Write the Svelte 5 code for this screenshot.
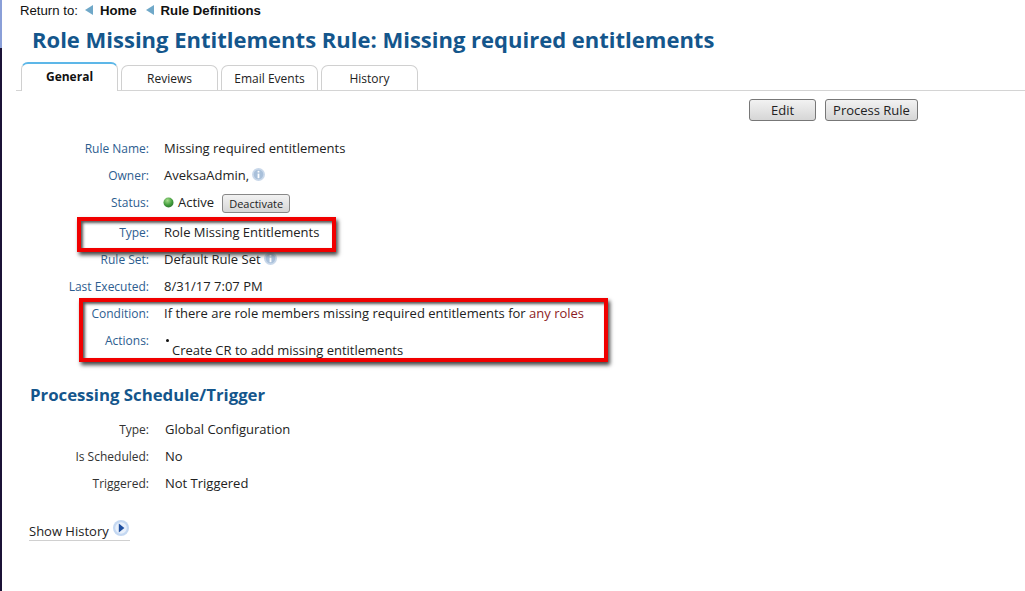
<script>
  const rows1 = [
    { label: 'Rule Name:', kind: 'text', value: 'Missing required entitlements' },
    { label: 'Owner:', kind: 'info', value: 'AveksaAdmin,' },
    { label: 'Status:', kind: 'status', value: 'Active' },
    { label: 'Type:', kind: 'text', value: 'Role Missing Entitlements' },
    { label: 'Rule Set:', kind: 'info', value: 'Default Rule Set' },
    { label: 'Last Executed:', kind: 'text', value: '8/31/17 7:07 PM' },
    { label: 'Condition:', kind: 'cond', value: 'If there are role members missing required entitlements for ' },
    { label: 'Actions:', kind: 'action', value: 'Create CR to add missing entitlements' }
  ];
  const rows2 = [
    { label: 'Type:', value: 'Global Configuration' },
    { label: 'Is Scheduled:', value: 'No' },
    { label: 'Triggered:', value: 'Not Triggered' }
  ];
  const tabs = ['General', 'Reviews', 'Email Events', 'History'];
</script>

<div class="page">
  <nav class="crumbs">
    <span>Return to:</span>
    <svg class="tri" viewBox="0 0 8 10" width="8" height="10"><path d="M0 5 L8 0 V10 Z" fill="#6fa8c8" /></svg>
    <b>Home</b>
    <svg class="tri" viewBox="0 0 8 10" width="8" height="10"><path d="M0 5 L8 0 V10 Z" fill="#6fa8c8" /></svg>
    <b>Rule Definitions</b>
  </nav>
  <h1>Role Missing Entitlements Rule: Missing required entitlements</h1>

  <div class="tabs">
    {#each tabs as t, i}
      <div class="tab" class:active={i === 0}>{t}</div>
    {/each}
  </div>

  <div class="actions">
    <button class="btn edit">Edit</button>
    <button class="btn process">Process Rule</button>
  </div>

  <div class="grid first">
    {#each rows1 as r}
      <div class="row" class:tall={r.kind === 'status'}>
        <div class="label">{r.label}</div>
        <div class="value" class:block={r.kind === 'action' || r.kind === 'cond'}>
          {#if r.kind === 'status'}
            <svg class="dot" viewBox="0 0 11 11" width="11" height="11">
              <defs><radialGradient id="g" cx="0.4" cy="0.3" r="0.8"><stop offset="0" stop-color="#a5dc8c" /><stop offset="0.6" stop-color="#3f9a3a" /><stop offset="1" stop-color="#2a6a2c" /></radialGradient></defs>
              <circle cx="5.5" cy="5.5" r="5" fill="url(#g)" />
            </svg>
            <span class="active-text">{r.value}</span>
            <button class="btn small">Deactivate</button>
          {:else if r.kind === 'info'}
            <span>{r.value}</span>
            <svg class="info" viewBox="0 0 13 13" width="13" height="13">
              <circle cx="6.5" cy="6.5" r="6.5" fill="#c9d8ea" />
              <circle cx="6.5" cy="6.5" r="4.8" fill="#a9c0da" />
              <rect x="5.6" y="5.6" width="1.8" height="4.6" fill="#fff" />
              <rect x="5.6" y="2.8" width="1.8" height="1.7" fill="#fff" />
            </svg>
          {:else if r.kind === 'cond'}
            {r.value}<span class="red">any roles</span>
          {:else if r.kind === 'action'}
            <ul><li>{r.value}</li></ul>
          {:else}
            <span>{r.value}</span>
          {/if}
        </div>
      </div>
    {/each}
  </div>

  <h2>Processing Schedule/Trigger</h2>

  <div class="grid second">
    {#each rows2 as r}
      <div class="row">
        <div class="label dark">{r.label}</div>
        <div class="value">{r.value}</div>
      </div>
    {/each}
  </div>

  <div class="history">
    <span>Show History</span>
    <svg viewBox="0 0 16 16" width="16" height="16">
      <circle cx="8" cy="8" r="8" fill="#c4d8f2" />
      <circle cx="8" cy="8" r="5.8" fill="#e8f0fb" />
      <path d="M5.8 3.6 L11.4 8 L5.8 12.4 Z" fill="#1f4fa0" />
    </svg>
  </div>

  <div class="mark one"></div>
  <div class="mark two"></div>
</div>

<style>
  :global(body) { margin: 0; background: #fff; }
  .page {
    position: relative;
    box-sizing: border-box;
    width: 1025px;
    height: 591px;
    overflow: hidden;
    padding-left: 2px;
    font-family: "Open Sans", sans-serif;
    font-size: 13px;
    color: #222;
    background: linear-gradient(to bottom, #8a9fd8 0, #8a9fd8 48px, #1b1236 48px, #1b1236 100%) left top / 2px 100% no-repeat #fff;
  }
  .crumbs {
    display: flex;
    align-items: center;
    height: 20px;
    padding-left: 18px;
    font-family: "Liberation Sans", sans-serif;
    font-size: 13.2px;
    color: #111;
  }
  .crumbs b { margin-right: 9px; }
  .tri { margin: 0 7px 0 7px; }
  .crumbs b + .tri { margin-left: 0; }
  h1 {
    margin: 4px 0 0 30px;
    font-size: 22px;
    line-height: 30px;
    font-weight: 700;
    color: #14568c;
    white-space: nowrap;
  }
  .tabs {
    display: flex;
    align-items: flex-end;
    gap: 3px;
    height: 28px;
    margin: 8px 0 0 14px;
    padding-left: 5px;
    border-bottom: 1px solid #d4d4d4;
  }
  .tab {
    box-sizing: border-box;
    width: 97px;
    height: 25px;
    border: 1px solid #d0d0d0;
    border-bottom: 0;
    border-radius: 7px 7px 0 0;
    text-align: center;
    font-size: 12px;
    line-height: 26px;
    color: #222;
  }
  .tab.active {
    height: 29px;
    margin-bottom: -1px;
    background: #fff;
    border-top: 2px solid #5db7e8;
    font-weight: 700;
    line-height: 26px;
    color: #111;
  }
  .actions {
    display: flex;
    justify-content: flex-end;
    gap: 9px;
    height: 22px;
    margin-top: 8px;
    padding-right: 107px;
  }
  .btn {
    box-sizing: border-box;
    height: 22px;
    padding: 0 8px;
    border: 1px solid #777;
    border-radius: 3px;
    background: linear-gradient(to bottom, #f2f2f2, #d6d6d6);
    font-family: "Open Sans", sans-serif;
    font-size: 13px;
    color: #222;
  }
  .btn.edit { width: 67px; }
  .btn.process { width: 93px; padding: 0; }
  .btn.small {
    height: 19px;
    margin-left: 4px;
    padding: 0 6px;
    font-size: 11px;
    border-color: #888;
  }
  .grid.first { margin-top: 18px; }
  .row {
    display: grid;
    grid-template-columns: 147px 1fr;
    column-gap: 15px;
    min-height: 27px;
    line-height: 18px;
    align-items: start;
  }
  .row.tall { min-height: 30px; }
  .label { padding-top: 1px; text-align: right; color: #2d5d8f; font-size: 12px; }
  .label.dark { color: #333; }
  .value { display: flex; align-items: center; gap: 4px; height: 18px; white-space: pre; }
  .value.block { display: block; height: auto; }
  .row.tall .value { height: 20px; }
  .active-text { margin-bottom: 2px; }
  .red { color: #8c1c24; }
  .info { margin: 0 0 1px -1px; }
  .dot { margin: 0 0 2px -1px; }
  ul { margin: 0; padding: 0; list-style: none; position: relative; }
  li { padding: 10px 0 0 8px; line-height: 18px; }
  li::before {
    content: "";
    position: absolute;
    left: 2px;
    top: 8px;
    width: 3px;
    height: 3px;
    border-radius: 50%;
    background: #111;
  }
  h2 {
    margin: 24px 0 0 28px;
    font-size: 16.8px;
    line-height: 24px;
    font-weight: 700;
    color: #14568c;
  }
  .grid.second { margin-top: 13px; }
  .grid.second .value { margin-left: 1px; }
  .history {
    display: flex;
    align-items: flex-start;
    gap: 4px;
    width: 101px;
    margin: 18px 0 0 27px;
    height: 21px;
    border-bottom: 1px solid #d0d0d0;
    line-height: 22px;
    color: #222;
  }
  .history span { margin-top: 1px; }
  .history svg { margin-top: 1px; }
  .mark {
    position: absolute;
    box-sizing: border-box;
    border: 4px solid #f00000;
    box-shadow: 2px 3px 4px #444, inset 2px 2px 3px #555;
  }
  .mark.one { left: 77px; top: 217px; width: 259px; height: 35px; }
  .mark.two { left: 79px; top: 298px; width: 529px; height: 64px; }
</style>
